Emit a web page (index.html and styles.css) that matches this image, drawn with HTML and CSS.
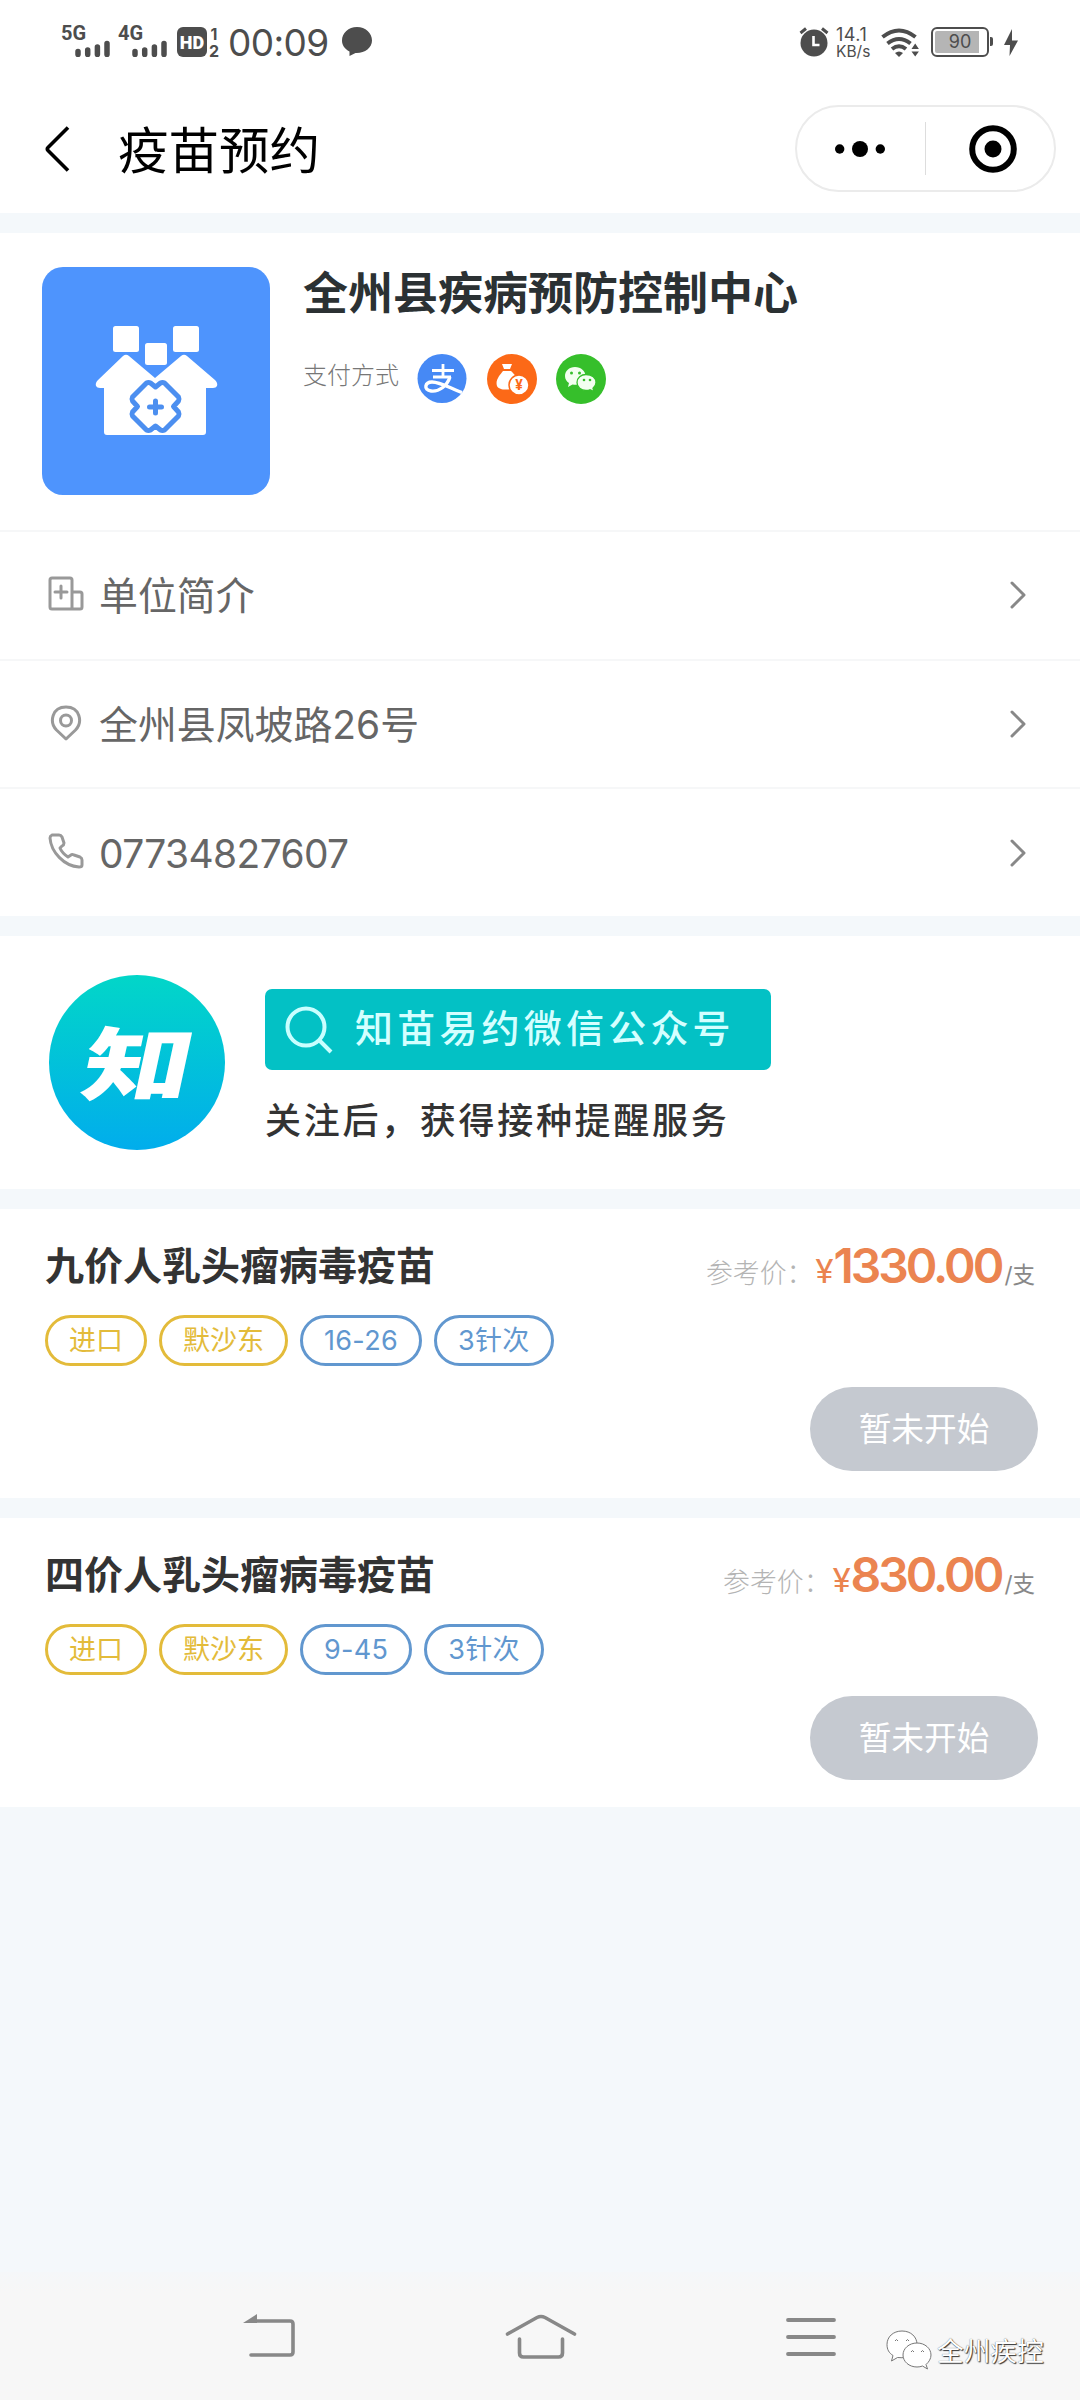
FILE: index.html
```html
<!DOCTYPE html>
<html lang="zh-CN">
<head>
<meta charset="utf-8">
<title>疫苗预约</title>
<link rel="stylesheet" href="styles.css">
</head>
<body>
<div class="screen">
  <div class="status">
    <div class="signal"><span class="net">5G</span><svg width="35" height="17" viewBox="0 0 35 17"><path d="M3 11.500v3M12.700 10v4.500M22.400 7v7.500M32 3.500v11" class="bars"/></svg></div>
    <div class="signal second"><span class="net">4G</span><svg width="35" height="17" viewBox="0 0 35 17"><path d="M3 11.500v3M12.700 10v4.500M22.400 7v7.500M32 3.500v11" class="bars"/></svg></div>
    <span class="hd">HD</span>
    <span class="sims"><span>1</span><span>2</span></span>
    <span class="clock">00:09</span>
    <svg class="bubble" width="30" height="30" viewBox="0 0 30 30"><path d="M15 0C6.500 0 0 6 0 13.500c0 4.500 2.500 8.500 7.500 11V29l6-3C22.500 26.500 30 21 30 13.500S23.500 0 15 0z" fill="#4d4d4d"/></svg>
    <span class="spacer"></span>
    <svg class="alarm" width="30" height="30" viewBox="0 0 30 30"><circle cx="15" cy="16" r="13.500" fill="#4d4d4d"/><path d="M1.500 6 7 1.500M23 1.500 28.500 6" stroke="#4d4d4d" stroke-width="3"/><path d="M14.500 9v9h6" fill="none" stroke="#fff" stroke-width="2.600"/></svg>
    <span class="speed"><span>14.1</span><span>KB/s</span></span>
    <svg class="wifi" width="39" height="30" viewBox="0 0 39 30"><g fill="none" stroke="#4d4d4d" stroke-width="4"><path d="M1.500 9Q18 -4 34.500 9"/><path d="M6.500 15.500Q18 6.500 29.500 15.500"/><path d="M11 21Q18 15.500 25 21"/></g><path d="M14 25q4-3 8 0l-4 4zM30.500 21l3.700-5.500 3.700 5.500zM30.500 23.500l3.700 5 3.700-5z" fill="#4d4d4d"/></svg>
    <span class="battery">90</span>
    <svg class="bolt" width="14" height="28" viewBox="0 0 14 28"><path d="M8 0 0 16h6L5.500 27 14 11.500H8z" fill="#4d4d4d"/></svg>
  </div>

  <header class="nav">
    <svg class="back" width="26" height="48" viewBox="0 0 26 48"><path d="M23 2.500 3 22.500q-1.500 1.500 0 3L23 45.500" fill="none" stroke="#000" stroke-width="3.600"/></svg>
    <h1>疫苗预约</h1>
    <div class="capsule">
      <svg width="50" height="18" viewBox="0 0 50 18"><circle cx="4.700" cy="9" r="4.700"/><circle cx="25" cy="9" r="8"/><circle cx="45.300" cy="9" r="4.700"/></svg>
      <i></i>
      <svg width="50" height="50" viewBox="0 0 50 50"><circle cx="25" cy="25" r="20.800" fill="none" stroke="#000" stroke-width="6"/><circle cx="25" cy="25" r="8.500"/></svg>
    </div>
  </header>

  <section class="org">
    <div class="intro">
      <svg class="logo" width="228" height="228" viewBox="0 0 228 228">
        <rect width="228" height="228" rx="21" fill="#4e94fd"/>
        <g fill="#fff"><rect x="71" y="59" width="26" height="26" rx="2.500"/><rect x="131" y="59" width="26" height="26" rx="2.500"/><rect x="103" y="76" width="22" height="22" rx="2.500"/>
        <path d="M81 89q3-2.500 6 0l26 22 26-22q3-2.500 6 0l28 24q3 3 2 6-1 2-4 2h-7v44q0 3-3 3H65q-3 0-3-3v-44h-4q-3 0-4-2-1-3 2-6z"/></g>
        <path d="M113.500 120l5-4q2-1 4 0l14 14q1 2 0 4l-5 5.500 5 5.500q1 2 0 4l-14 14q-2 1-4 0l-5-4-5 4q-2 1-4 0l-14-14q-1-2 0-4l5-5.500-5-5.500q-1-2 0-4l14-14q2-1 4 0z" fill="none" stroke="#4c8ff0" stroke-width="5" stroke-linejoin="round"/>
        <path d="M113.500 134v12M107.500 140h12" stroke="#4c8ff0" stroke-width="5" stroke-linecap="round"/>
      </svg>
      <div class="about">
        <h2>全州县疾病预防控制中心</h2>
        <div class="pay"><span>支付方式</span>
          <svg width="50" height="50" viewBox="0 0 50 50"><circle cx="25" cy="24.500" r="24.500" fill="#4689f5"/><g fill="none" stroke="#fff" stroke-width="2.800"><path d="M15 16.500h22M26 10v13M16 23h18"/><path d="M33 23C30 32 22 38 14 37c-8-1-6-9 1-9 8 0 18 6 30 10.500" stroke-width="3.400"/></g></svg>
          <svg width="50" height="50" viewBox="0 0 50 50"><circle cx="25" cy="25" r="25" fill="#fc6917"/><path d="M15 10h10l-2 5h-6zM16 17h8c4 4 8 8 7 13-1 6-18 8-21 2-2-6 3-11 6-15z" fill="#fff"/><circle cx="32" cy="31" r="10" fill="#fff" stroke="#fc6917" stroke-width="1.500"/><text x="32" y="36" text-anchor="middle" class="coin">¥</text></svg>
          <svg width="50" height="50" viewBox="0 0 50 50"><circle cx="25" cy="25" r="25" fill="#36bf2b"/><path d="M19 13c-6 0-10 4-10 9 0 3 1.500 5.500 4 7l-1 4 4.500-2.500c11 1.500 13-4 13-8.500 0-5-4.500-9-10.500-9z" fill="#f3fff0"/><path d="M30 20.500c-5 0-9 3.500-9 8s4 8 9 8q2.500 0 4-.8l4 2-1-3.500c2-1.500 3-3.500 3-5.700 0-4.500-4-8-10-8z" fill="#f3fff0" stroke="#36bf2b" stroke-width="1.300"/><g fill="#36bf2b"><circle cx="15.500" cy="19" r="1.500"/><circle cx="23.500" cy="19" r="1.500"/><circle cx="28" cy="26" r="1.300"/><circle cx="34" cy="26" r="1.300"/></g></svg>
        </div>
      </div>
    </div>
    <div class="row">
      <svg width="36" height="36" viewBox="0 0 36 36"><path d="M2 31V4q0-2 2-2h18q2 0 2 2v29M24 16h8q2 0 2 2v13q0 2-2 2H4q-2 0-2-2M13 10v12M7 16h12" /></svg>
      <span>单位简介</span><svg class="chev" width="18" height="30" viewBox="0 0 18 30"><path d="M3 3l12 12L3 27"/></svg>
    </div>
    <div class="row">
      <svg width="36" height="36" viewBox="0 0 36 36"><path d="M18 34 8.500 25C1 17 4 2 18 2s17 15 9.500 23z"/><circle cx="18" cy="15.500" r="5.500"/></svg>
      <span>全州县凤坡路26号</span><svg class="chev" width="18" height="30" viewBox="0 0 18 30"><path d="M3 3l12 12L3 27"/></svg>
    </div>
    <div class="row">
      <svg width="36" height="36" viewBox="0 0 36 36"><path d="M4 2h7q2 0 3 2l2 6q0 2-2 3l-2 2q2 5 8 9l3-2q1-1 3 0l6 2q2 1 2 3v5q0 2-3 2C16 33 3 19 2 5q0-2 2-3z"/></svg>
      <span class="phone">07734827607</span><svg class="chev" width="18" height="30" viewBox="0 0 18 30"><path d="M3 3l12 12L3 27"/></svg>
    </div>
  </section>

  <section class="follow">
    <div class="badge"><span>知</span></div>
    <div class="follow-text">
      <div class="search"><svg width="48" height="48" viewBox="0 0 48 48"><g fill="none" stroke="#c9ffff" stroke-width="4"><circle cx="21" cy="21" r="18.500"/><path d="M34 34l12 12"/></g></svg><span>知苗易约微信公众号</span></div>
      <p>关注后，获得接种提醒服务</p>
    </div>
  </section>

  <section class="vaccine">
    <div class="head"><h3>九价人乳头瘤病毒疫苗</h3><div class="price"><span class="ref">参考价：</span><span class="yen">¥</span><b>1330.00</b><span class="unit">/支</span></div></div>
    <div class="tags"><span class="y">进口</span><span class="y">默沙东</span><span class="b">16-26</span><span class="b">3针次</span></div>
    <button>暂未开始</button>
  </section>
  <section class="vaccine">
    <div class="head"><h3>四价人乳头瘤病毒疫苗</h3><div class="price"><span class="ref">参考价：</span><span class="yen">¥</span><b>830.00</b><span class="unit">/支</span></div></div>
    <div class="tags"><span class="y">进口</span><span class="y">默沙东</span><span class="b">9-45</span><span class="b">3针次</span></div>
    <button>暂未开始</button>
  </section>

  <footer class="keys">
    <svg width="54" height="44" viewBox="0 0 54 44"><path d="M12 7h36q3 0 3 3v28q0 3-3 3H9" fill="none" stroke="#888" stroke-width="3.600" stroke-linecap="round"/><path d="M15 0v9H1z" fill="#888"/></svg>
    <svg width="72" height="46" viewBox="0 0 72 46"><path d="M2.500 20 32 3.500q4-2 8 0L69.500 20M14.500 25v14q0 4 4 4h35q4 0 4-4V25" fill="none" stroke="#888" stroke-width="3.600" stroke-linecap="round"/></svg>
    <svg width="50" height="40" viewBox="0 0 50 40"><path d="M2 3h46M2 20h46M2 37h46" stroke="#888" stroke-width="3.800" stroke-linecap="round"/></svg>
    <div class="mark">
      <svg width="46" height="40" viewBox="0 0 46 40"><g fill="#fff" stroke="#777" stroke-width="1"><path d="M16 1C7 1 1 7 1 14.500c0 5 2 8.500 6 11L5.500 31l6-3.500C24 29 31 23 31 14.500 31 7 25 1 16 1z"/><path d="M31 13c-8 0-14 5.500-14 12s6 12 14 12q3 0 5.500-1l5 3-1.500-4.500c3-2.500 5-6 5-9.500 0-6.500-6-12-14-12z"/></g><g fill="none" stroke="#777"><path d="M9 11q1.500-3 3 0M20 11q1.500-3 3 0M25 22q1.500-3 3 0M35 22q1.500-3 3 0"/></g></svg>
      <span>全州疾控</span>
    </div>
  </footer>
</div>
</body>
</html>
```
FILE: styles.css
```css
* { box-sizing: border-box; margin: 0; padding: 0; }
body { width: 1080px; background: #f4f8fb; font-family: Inter, "Noto Sans CJK SC", sans-serif; }
svg { display: block; flex: none; }
h1, h2, h3, span, p { white-space: nowrap; }
.screen { width: 1080px; height: 2400px; display: flex; flex-direction: column; }

.status { height: 84px; padding: 0 62px 0 61px; background: #fff; display: flex; align-items: flex-start; color: #4d4d4d; flex: none; }
.signal { width: 48px; height: 32px; margin-top: 25px; display: flex; flex-direction: column; }
.signal svg { margin: -1px 0 0 14px; }
.signal.second { margin-left: 9px; }
.net { font: 700 20px/16px Roboto, sans-serif; height: 16px; }
.bars { stroke: #4d4d4d; stroke-width: 5.500; stroke-linecap: round; fill: none; }
.hd { width: 30px; height: 30px; margin: 27px 0 0 11px; border-radius: 6px; background: #4d4d4d; color: #fff; font: 900 18px/31px Roboto, sans-serif; text-align: center; }
.sims { margin: 26px 0 0 2px; width: 10px; font: 700 16px/17px Inter, sans-serif; display: flex; flex-direction: column; align-items: center; }
.clock { width: 101px; margin: 20px 0 0 9px; font: 400 37px/45px Inter, sans-serif; letter-spacing: -.6px; }
.bubble { margin: 27px 0 0 13px; }
.spacer { flex: 1; }
.alarm { margin-top: 27px; margin-right: 7px; }
.speed { margin: 26px 0 0 0; width: 36px; display: flex; flex-direction: column; font: 400 15.500px/17px Inter, sans-serif; }
.speed span:first-child { font-size: 18px; letter-spacing: .5px; }
.wifi { margin: 28px 0 0 9px; }
.battery { position: relative; width: 58px; height: 30px; margin: 27px 0 0 11px; border: 2.500px solid #4d4d4d; border-radius: 6px; background: linear-gradient(90deg, #b5b5b5 44px, #fff 44px) content-box; padding: 2px; font: 400 18px/22px Inter, sans-serif; text-align: center; }
.battery::after { content: ""; position: absolute; right: -6px; top: 8px; width: 3px; height: 9px; background: #4d4d4d; border-radius: 0 2px 2px 0; }
.bolt { margin: 29px 0 0 15px; }

.nav { height: 129px; background: #fff; display: flex; align-items: center; padding: 0 24px 0 45px; flex: none; }
.nav h1 { margin: -4px 0 0 47px; font: 400 50.500px/72px "Noto Sans CJK SC", sans-serif; }
.capsule { margin-left: auto; width: 261px; height: 87px; border: 2px solid #ebebeb; border-radius: 44px; display: flex; align-items: center; padding: 0 36px 0 38px; }
.capsule i { width: 1px; height: 53px; background: #ddd; margin: 0 42px 0 40px; }

.org { margin-top: 20px; background: #fff; flex: none; height: 683px; }
.intro { height: 297px; padding: 34px 42px 0; display: flex; gap: 33px; }
.about h2 { font: 700 45px/60px "Noto Sans CJK SC", sans-serif; color: #2b3133; margin-top: -6px; }
.pay { display: flex; align-items: center; margin-top: 33px; height: 50px; }
.pay span { font: 300 24px/40px "Noto Sans CJK SC", sans-serif; color: #777; margin: -10px 18px 0 0; }
.pay svg + svg { margin-left: 19.500px; }
.coin { font: 700 14px Roboto, sans-serif; fill: #fc6917; }
.row { height: 128.700px; border-top: 2px solid #f6f7f8; display: flex; align-items: center; padding: 0 53px 0 48px; }
.row svg { fill: none; stroke: #999; stroke-width: 3; stroke-linecap: round; stroke-linejoin: round; margin-top: -3px; }
.row span { margin: 1px 0 0 15px; font-size: 38.900px; line-height: 60px; color: #666; }
.row .phone { letter-spacing: -.6px; margin-top: 3px; }
.row .chev { margin: 0 0 0 auto; stroke: #888; }

.follow { margin-top: 20px; height: 253px; background: #fff; display: flex; padding: 39px 49px 0; flex: none; }
.badge { width: 176px; height: 175px; border-radius: 50%; background: linear-gradient(#02d6c8, #01adec); display: flex; align-items: center; justify-content: center; }
.badge span { font: 900 80px/90px "Noto Sans CJK SC", sans-serif; color: #fff; transform: translate(3px, -4px) scaleX(1.360) skewX(-9deg); }
.follow-text { margin: 14px 0 0 40px; }
.search { width: 506px; height: 81px; border-radius: 7px; background: #03c1c5; display: flex; align-items: center; padding-left: 20px; color: #d4ffff; }
.search span { margin-left: 22px; font: 500 38px/56px "Noto Sans CJK SC", sans-serif; letter-spacing: 4.200px; margin-top: -7px; }
.follow-text p { font: 500 36px/54px "Noto Sans CJK SC", sans-serif; letter-spacing: 2.700px; color: #333; margin-top: 21px; }

.vaccine { margin-top: 20px; height: 289px; background: #fff; padding: 25px 42px 0 45px; flex: none; display: flex; flex-direction: column; }
.head { display: flex; justify-content: space-between; height: 60px; }
.head h3 { font: 700 39px/60px "Noto Sans CJK SC", sans-serif; color: #333; margin-top: -1px; }
.price { display: flex; align-items: baseline; padding-right: 3px; line-height: 66px; height: 60px; margin-top: -1px; }
.ref { font-size: 26.900px; font-weight: 300; color: #b4b4b4; margin-right: 2px; }
.yen { color: #eb8450; font: 400 34px/66px Roboto, sans-serif; }
.price b { color: #eb8450; font-size: 48px; font-weight: 600; letter-spacing: -3px; margin-right: 3px; }
.unit { color: #888; font-size: 22.500px; }
.tags { display: flex; gap: 12px; margin-top: 21px; }
.tags span { height: 51px; padding: 0 21px; border: 3px solid; border-radius: 26px; font-size: 27px; line-height: 45px; }
.tags .y { color: #e3bb3a; }
.tags .b { color: #6197cf; letter-spacing: .3px; }
.vaccine button { align-self: flex-end; margin-top: 21px; width: 228px; height: 84px; border: 0; border-radius: 42px; background: #c5c9d0; color: #fff; font: 400 32.700px/80px "Noto Sans CJK SC", sans-serif; padding-bottom: 5px; }

.keys { margin-top: auto; height: 128px; background: linear-gradient(#f5f7f9, #f7f7f7 20px); display: flex; align-items: flex-start; padding: 42px 35px 0 242px; flex: none; }
.keys > svg:nth-child(2) { margin-left: 209px; }
.keys > svg:nth-child(3) { margin: 3px 0 0 209px; }
.mark { margin: 16px 0 0 50px; display: flex; gap: 5px; }
.mark span { font: 400 26.700px/40px "Noto Sans CJK SC", sans-serif; color: #fff; text-shadow: 1px 1px 1px #333, 0 0 1px #555; }
```
